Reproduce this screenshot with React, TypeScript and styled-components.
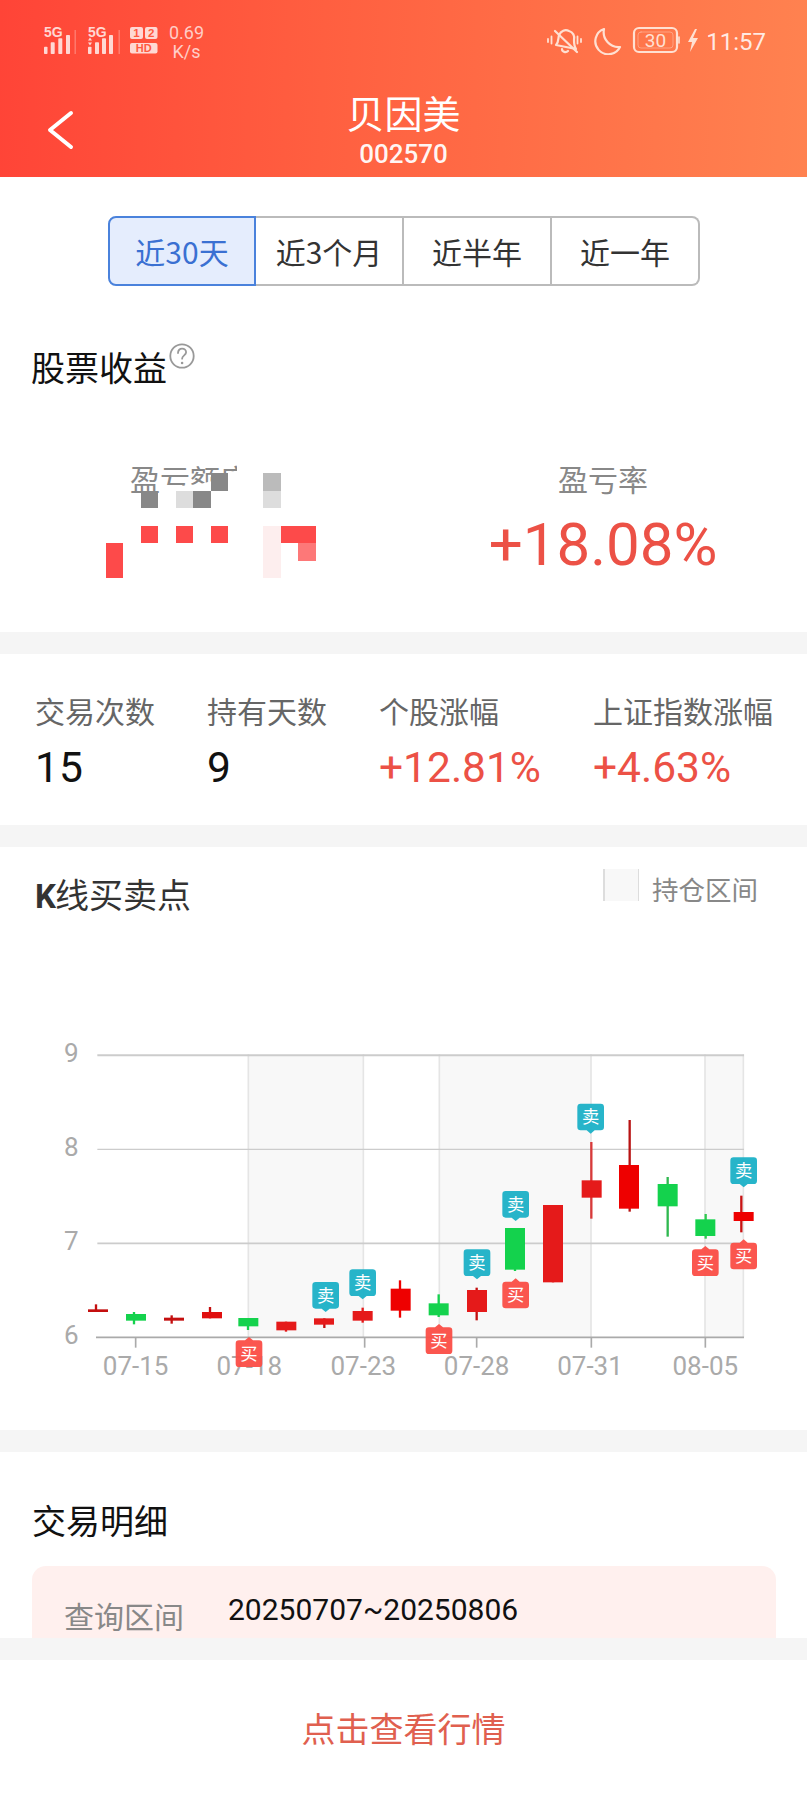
import React from 'react';
import styled, { createGlobalStyle } from 'styled-components';

const CJK = '"Noto Sans CJK SC", "Noto Sans", sans-serif';
const NUM = 'Roboto, "Noto Sans CJK SC", sans-serif';

const Global = createGlobalStyle`
  html, body { margin: 0; padding: 0; background: #fff; }
  * { box-sizing: border-box; }
`;

const Page = styled.div`
  width: 807px; height: 1794px; display: flex; flex-direction: column; overflow: hidden;
  background: #fff; font-family: ${CJK}; color: #111;
`;
const Header = styled.header`
  height: 177px; color: #fff; background: linear-gradient(92deg, #ff4437 0%, #ff5f40 40%, #ff8250 100%);
`;
const StatusBar = styled.div`
  height: 78px; padding: 25px 41px 0 44px; display: flex; justify-content: space-between; align-items: flex-start;
`;
const StatusLeft = styled.div`display: flex; gap: 9px; align-items: flex-start;`;
const StatusRight = styled.div`display: flex; gap: 7px; align-items: center; height: 30px;`;
const Speed = styled.div`
  font: 400 18px/18px ${NUM}; text-align: center; color: rgba(255,255,255,.72); margin-top: -1px;
  display: flex; flex-direction: column; gap: 1px;
`;
const Clock = styled.span`font: 400 24px/30px ${NUM}; color: rgba(255,255,255,.85); margin-top: 4px;`;
const TitleBar = styled.div`
  display: grid; grid-template-columns: 1fr auto 1fr; padding-top: 8px; align-items: start;
`;
const BackIcon = styled.svg`display: block; margin: 24px 0 0 46px;`;
const TitleBlock = styled.div`text-align: center;`;
const TitleText = styled.div`font-size: 38px; line-height: 52px; color: #fff;`;
const CodeText = styled.div`font: 500 26px/30px ${NUM}; color: rgba(255,255,255,.95); margin-top: 1px;`;

const Tabs = styled.div`
  margin: 39px 0 0 108px; width: 592px; height: 70px; display: grid; grid-template-columns: repeat(4, 1fr);
`;
const Tab = styled.div<{ $active?: boolean; $first?: boolean; $last?: boolean }>`
  display: flex; align-items: center; justify-content: center; font-size: 30px;
  border: 2px solid ${p => (p.$active ? '#4a82dc' : '#bbb')};
  border-left-width: ${p => (p.$first ? '2px' : '0')};
  border-radius: ${p => (p.$first ? '8px 0 0 8px' : p.$last ? '0 8px 8px 0' : '0')};
  background: ${p => (p.$active ? '#e5edfd' : '#fff')};
  color: ${p => (p.$active ? '#3a70d2' : '#333')};
`;

const SectionTitleRow = styled.div`
  margin: 57px 0 0 31px; display: flex; align-items: flex-start;
`;
const SectionTitle = styled.h2`
  margin: 0; font-size: 34px; line-height: 48px; font-weight: 400; color: #111;
`;
const HelpIcon = styled.svg`display: block; margin: 0 0 0 2px;`;

const ProfitGrid = styled.div`
  margin-top: 67px; padding-bottom: 2px; display: grid; grid-template-columns: 380px 386px; column-gap: 30px; height: 174px;
`;
const ProfitCol = styled.div`position: relative; text-align: center;`;
const ProfitLabel = styled.div`font-size: 30px; line-height: 40px; color: #888;`;
const ProfitValue = styled.div`
  font: 400 60px/70px ${NUM}; color: #ec5146; margin-top: 12px;
`;
const Mosaic = styled.svg`position: absolute; left: 0; top: 0; display: block;`;

const Divider = styled.div`height: 22px; flex: none; background: #f5f5f5;`;

const Stats = styled.section`
  height: 171px; padding: 36px 0 0 35px; display: flex; gap: 52px;
`;
const StatCol = styled.div`display: flex; flex-direction: column; gap: 13px;`;
const StatLabel = styled.div`font-size: 30px; line-height: 40px; color: #666; white-space: nowrap;`;
const StatValue = styled.div<{ $up?: boolean }>`
  font: 400 42.5px/50px ${NUM}; color: ${p => (p.$up ? '#ec5146' : '#111')};
`;

const ChartSection = styled.section`height: 582px; padding-top: 22px; margin-top: 1px;`;
const ChartHead = styled.div`
  display: flex; justify-content: space-between; align-items: flex-start; padding: 0 49px 0 35px;
`;
const ChartTitle = styled.h2`
  margin: 0; font-size: 34px; line-height: 48px; font-weight: 400; color: #333;
  b { font: 700 33px/48px Roboto, sans-serif; margin-right: -1px; }
`;
const Legend = styled.div`display: flex; gap: 13px; margin-top: -1px;`;
const LegendBox = styled.div`
  width: 36px; height: 32px; background: #f8f8f8; border-left: 2px solid #ddd; border-right: 1px solid #ddd;
`;
const LegendText = styled.span`font-size: 26.5px; line-height: 32px; color: #888; margin-top: 4px;`;
const ChartSvg = styled.svg`display: block; margin-top: 110px;`;
const AxisText = styled.text`font-family: ${NUM}; font-size: 78px; fill: #aaa;`;
const MarkText = styled.text`font-family: ${CJK}; font-size: 52px; fill: #fff; text-anchor: middle;`;

const Details = styled.section`height: 186px; flex: none; overflow: hidden; padding-top: 44px;`;
const DetailsTitle = styled(SectionTitle)`margin-left: 32px;`;
const DetailCard = styled.div`
  margin: 22px 31px 0 32px; height: 240px; padding: 24px 32px; border-radius: 14px; background: #fff0ee;
  display: flex; gap: 44px; align-items: flex-start;
`;
const DetailLabel = styled.div`font-size: 30px; line-height: 40px; color: #888; margin-top: 5px;`;
const DetailValue = styled.div`font: 400 30px/40px ${NUM}; color: #111;`;

const Footer = styled.footer`
  flex: 1; display: flex; align-items: center; justify-content: center;
  font-size: 34px; color: #e0604f;
`;

type Candle = { x: number; w: number; t: number; b: number; hi: number; lo: number; c: string; wc?: string };
const R = '#e51a1a', R2 = '#ee0000', D = '#c40f0f', G = '#14d24d';
const candles: Candle[] = [
  { x: 294, w: 288, t: 835, b: 843, hi: 820, lo: 843, c: D },
  { x: 408, w: 402, t: 849, b: 869, hi: 843, lo: 880, c: G },
  { x: 522, w: 515, t: 860, b: 869, hi: 853, lo: 878, c: D },
  { x: 636, w: 630, t: 843, b: 862, hi: 828, lo: 862, c: '#e00f0f', wc: D },
  { x: 745, w: 744, t: 861, b: 886, hi: 861, lo: 897, c: G },
  { x: 859, w: 858, t: 872, b: 898, hi: 872, lo: 902, c: R },
  { x: 972, w: 973, t: 862, b: 881, hi: 862, lo: 891, c: R, wc: D },
  { x: 1088, w: 1088, t: 840, b: 869, hi: 830, lo: 875, c: R },
  { x: 1202, w: 1200, t: 773, b: 839, hi: 748, lo: 860, c: R2 },
  { x: 1316, w: 1316, t: 817, b: 853, hi: 790, lo: 858, c: G },
  { x: 1431, w: 1430, t: 777, b: 843, hi: 770, lo: 868, c: R, wc: D },
  { x: 1545, w: 1545, t: 591, b: 716, hi: 591, lo: 720, c: G },
  { x: 1659, w: 1659, t: 522, b: 754, hi: 522, lo: 754, c: R },
  { x: 1775, w: 1774, t: 448, b: 500, hi: 333, lo: 563, c: R, wc: '#d83a3a' },
  { x: 1887, w: 1889, t: 402, b: 533, hi: 267, lo: 542, c: R2, wc: '#b81414' },
  { x: 2003, w: 2003, t: 459, b: 526, hi: 438, lo: 617, c: G, wc: '#30b850' },
  { x: 2116, w: 2117, t: 565, b: 615, hi: 549, lo: 623, c: G, wc: '#30c850' },
  { x: 2231, w: 2224, t: 543, b: 570, hi: 494, lo: 604, c: R2, wc: '#c81414' },
];

type Mark = { sell: boolean; cx: number; top: number };
const marks: Mark[] = [
  { sell: false, cx: 747, top: 928 },
  { sell: true, cx: 977, top: 753 },
  { sell: true, cx: 1088, top: 715 },
  { sell: false, cx: 1317, top: 889 },
  { sell: true, cx: 1431, top: 655 },
  { sell: true, cx: 1547, top: 480 },
  { sell: false, cx: 1547, top: 752 },
  { sell: true, cx: 1772, top: 218 },
  { sell: true, cx: 2231, top: 379 },
  { sell: false, cx: 2116, top: 655 },
  { sell: false, cx: 2231, top: 635 },
];

const bands: [number, number][] = [[745, 1090], [1318, 1773], [2115, 2230]];
const vLines = [745, 1090, 1318, 1773, 2115, 2230];
const ticks = [407, 1094, 1430, 1774, 2116];
const xLabels: [string, number][] = [['07-15', 407], ['07-18', 748], ['07-23', 1090], ['07-28', 1430], ['07-31', 1770], ['08-05', 2116]];
const yLabels: [string, number][] = [['9', 92], ['8', 375], ['7', 657], ['6', 939]];

const MarkerPin = ({ sell, cx, top }: Mark) => (
  <g opacity={0.96}>
    {sell ? (
      <path d={`M${cx - 30} ${top}h60a10 10 0 0 1 10 10v60a10 10 0 0 1-10 10h-18l-12 10-12-10h-18a10 10 0 0 1-10-10v-60a10 10 0 0 1 10-10z`} fill="#1fb2c8" />
    ) : (
      <path d={`M${cx - 30} ${top}h18l12-10 12 10h18a10 10 0 0 1 10 10v60a10 10 0 0 1-10 10h-60a10 10 0 0 1-10-10v-60a10 10 0 0 1 10-10z`} fill="#fb5048" />
    )}
    <MarkText x={cx} y={top + 59}>{sell ? '卖' : '买'}</MarkText>
  </g>
);

const KChart = () => (
  <ChartSvg width={807} height={370} viewBox="0 0 2421 1110">
    {bands.map(([a, b]) => <rect key={a} x={a} y={73} width={b - a} height={846} fill="#f8f8f8" />)}
    {vLines.map(x => <line key={x} x1={x} x2={x} y1={70} y2={919} stroke="#e5e5e5" strokeWidth={5} />)}
    <line x1={292} x2={2232} y1={73} y2={73} stroke="#ccc" strokeWidth={6} />
    <line x1={292} x2={2232} y1={355} y2={355} stroke="#ccc" strokeWidth={4} />
    <line x1={292} x2={2232} y1={637} y2={637} stroke="#ccc" strokeWidth={5} />
    <line x1={288} x2={2232} y1={919} y2={919} stroke="#aaa" strokeWidth={5} />
    {ticks.map(x => <line key={x} x1={x} x2={x} y1={919} y2={950} stroke="#aaa" strokeWidth={5} />)}
    {yLabels.map(([t, y]) => <AxisText key={t} x={192} y={y}>{t}</AxisText>)}
    {xLabels.map(([t, x]) => <AxisText key={t} x={x} y={1033} textAnchor="middle">{t}</AxisText>)}
    {candles.map(k => (
      <g key={k.x}>
        <line x1={k.w} x2={k.w} y1={k.hi} y2={k.lo} stroke={k.wc || k.c} strokeWidth={7} />
        <rect x={k.x - 30} y={k.t} width={60} height={k.b - k.t} fill={k.c} />
      </g>
    ))}
    {marks.map(m => <MarkerPin key={`${m.cx}-${m.top}`} {...m} />)}
  </ChartSvg>
);

const LeftIndicators = () => {
  const barsA = [[44, 46.7, 3.5], [50.7, 42.3, 4], [58.3, 38.3, 4], [66, 35, 4]];
  const barsB = [[88, 46.7, 3.5], [95, 42.3, 4], [102, 38.3, 4], [109, 35, 4]];
  const labelStyle = { fontFamily: '"Liberation Sans", sans-serif', fontWeight: 700 };
  return (
    <svg width={116} height={32} viewBox="44 25 116 32" fill="#fff" fillOpacity={0.78}>
      <text x={44} y={36.5} fontSize={14} style={labelStyle}>5G</text>
      {barsA.map(([x, y, w]) => <rect key={x} x={x} y={y} width={w} height={54 - y} rx={0.8} />)}
      <rect x={74.5} y={30} width={1.4} height={24} fillOpacity={0.28} />
      <text x={88} y={36.5} fontSize={14} style={labelStyle}>5G</text>
      <path d="M90 37.5l-2 3h4zM90 45.5l-2-3h4z" />
      {barsB.map(([x, y, w]) => <rect key={x} x={x} y={y} width={w} height={54 - y} rx={0.8} />)}
      <rect x={118.5} y={30} width={1.4} height={24} fillOpacity={0.28} />
      <rect x={130} y={27} width={13} height={12} rx={2} />
      <rect x={145} y={27} width={12.5} height={12} rx={2} />
      <rect x={130} y={43} width={27.5} height={10.5} rx={2} />
      <text x={136.5} y={37.3} fontSize={11.5} textAnchor="middle" fill="#ff5a3f" fillOpacity={1} style={labelStyle}>1</text>
      <text x={151.2} y={37.3} fontSize={11.5} textAnchor="middle" fill="#ff5a3f" fillOpacity={1} style={labelStyle}>2</text>
      <text x={143.7} y={52} fontSize={11} textAnchor="middle" fill="#ff5a3f" fillOpacity={1} style={labelStyle}>HD</text>
    </svg>
  );
};

const RightIndicators = () => (
  <svg width={152} height={30} viewBox="548 25 152 30" fill="none" stroke="#ffe0d2" strokeWidth={2.2} strokeLinecap="round" strokeLinejoin="round">
    <path d="M557 45c3-3 2-7 3-10 2-4 6-6 10-4 4 1 6 5 5 9 0 3 0 6 2 9z" />
    <path d="M563 49c0 3 4 4 6 2" />
    <path d="M556 31l22 21" />
    <path d="M549 39v3M552.5 36.5v7M582 39v3M578.5 36.5v7" strokeWidth={1.8} />
    <path d="M605 29a13 13 0 1 0 16 18a15 15 0 0 1-16-18z" />
    <rect x={635} y={28} width={43} height={24} rx={5} />
    <rect x={639} y={32} width={35} height={16} rx={3} strokeWidth={1} strokeOpacity={0.4} />
    <path d="M680 37v6" strokeWidth={1.6} />
    <text x={656.5} y={46.8} fontSize={19} textAnchor="middle" fill="#ffe0d2" stroke="none" fontFamily="Roboto, sans-serif">30</text>
    <path d="M696 29l-7 13h4l-2 10 8-14h-5l4-9z" fill="#ffe0d2" stroke="none" />
  </svg>
);

const tabs = ['近30天', '近3个月', '近半年', '近一年'];
const stats: { label: string; value: string; up?: boolean }[] = [
  { label: '交易次数', value: '15' },
  { label: '持有天数', value: '9' },
  { label: '个股涨幅', value: '+12.81%', up: true },
  { label: '上证指数涨幅', value: '+4.63%', up: true },
];

export default function App() {
  return (
    <Page>
      <Global />
      <Header>
        <StatusBar>
          <StatusLeft>
            <LeftIndicators />
            <Speed><span>0.69</span><span>K/s</span></Speed>
          </StatusLeft>
          <StatusRight>
            <RightIndicators />
            <Clock>11:57</Clock>
          </StatusRight>
        </StatusBar>
        <TitleBar>
          <BackIcon width={28} height={40} viewBox="0 0 28 40" fill="none" stroke="#fff" strokeWidth={4} strokeLinecap="round" strokeLinejoin="round">
            <path d="M25 3L4 20l21 17" />
          </BackIcon>
          <TitleBlock>
            <TitleText>贝因美</TitleText>
            <CodeText>002570</CodeText>
          </TitleBlock>
          <span />
        </TitleBar>
      </Header>

      <Tabs>
        {tabs.map((t, i) => (
          <Tab key={t} $active={i === 0} $first={i === 0} $last={i === tabs.length - 1}>{t}</Tab>
        ))}
      </Tabs>

      <SectionTitleRow>
        <SectionTitle>股票收益</SectionTitle>
        <HelpIcon width={26} height={26} viewBox="0 0 26 26" fill="none" stroke="#999" strokeWidth={1.8}>
          <circle cx={13} cy={13} r={11.7} />
          <path d="M9 10c0-2.8 1.8-4.4 4.1-4.4s4 1.6 4 3.7c0 3-4 3.2-4 6.4" strokeLinecap="round" />
          <circle cx={13.1} cy={20} r={1.3} fill="#999" stroke="none" />
        </HelpIcon>
      </SectionTitleRow>

      <ProfitGrid>
        <ProfitCol>
          <ProfitLabel>盈亏额度</ProfitLabel>
          <ProfitValue>&nbsp;</ProfitValue>
          <Mosaic width={380} height={122} viewBox="0 458 380 122">
            <path d="M160 488L200 484L224 478L228 472H237V458H300V512H160Z" fill="#fff" />
            <rect x={211} y={473} width={17} height={18} fill="#888" />
            <rect x={141} y={491} width={17} height={17} fill="#888" />
            <rect x={176} y={491} width={17} height={17} fill="#ddd" />
            <rect x={193} y={491} width={18} height={17} fill="#888" />
            <rect x={263} y={473} width={18} height={18} fill="#bbb" />
            <rect x={263} y={491} width={18} height={17} fill="#ddd" />
            <rect x={141} y={526} width={17} height={17} fill="#fd4a4a" />
            <rect x={176} y={526} width={17} height={17} fill="#fd4a4a" />
            <rect x={211} y={526} width={17} height={17} fill="#fd4a4a" />
            <rect x={263} y={526} width={18} height={52} fill="#fdeeee" />
            <rect x={281} y={526} width={35} height={17} fill="#fd4a4a" />
            <rect x={298} y={543} width={18} height={18} fill="#fd7878" />
            <rect x={106} y={543} width={17} height={35} fill="#fd4a4a" />
          </Mosaic>
        </ProfitCol>
        <ProfitCol>
          <ProfitLabel>盈亏率</ProfitLabel>
          <ProfitValue>+18.08%</ProfitValue>
        </ProfitCol>
      </ProfitGrid>

      <Divider />
      <Stats>
        {stats.map(s => (
          <StatCol key={s.label}>
            <StatLabel>{s.label}</StatLabel>
            <StatValue $up={s.up}>{s.value}</StatValue>
          </StatCol>
        ))}
      </Stats>
      <Divider />

      <ChartSection>
        <ChartHead>
          <ChartTitle><b>K</b>线买卖点</ChartTitle>
          <Legend>
            <LegendBox />
            <LegendText>持仓区间</LegendText>
          </Legend>
        </ChartHead>
        <KChart />
      </ChartSection>

      <Divider />
      <Details>
        <DetailsTitle>交易明细</DetailsTitle>
        <DetailCard>
          <DetailLabel>查询区间</DetailLabel>
          <DetailValue>20250707~20250806</DetailValue>
        </DetailCard>
      </Details>
      <Divider />
      <Footer>点击查看行情</Footer>
    </Page>
  );
}
